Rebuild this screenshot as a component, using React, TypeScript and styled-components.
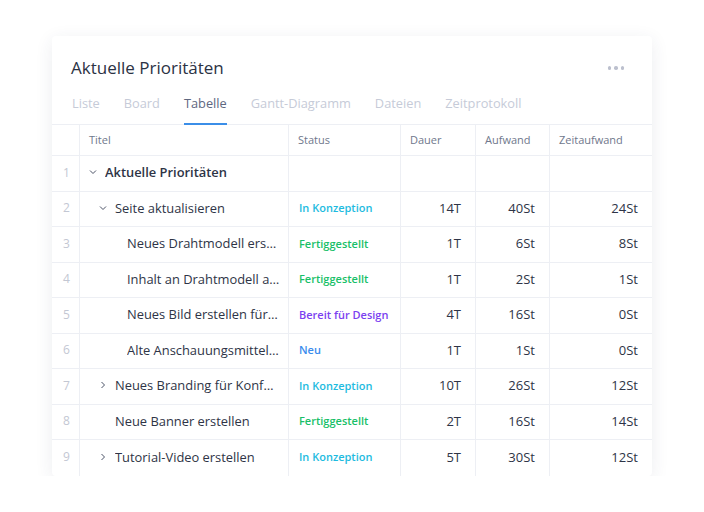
import React from "react";
import styled, { createGlobalStyle } from "styled-components";

const GlobalStyle = createGlobalStyle`
  body {
    margin: 0;
    background: #ffffff;
    font-family: "Open Sans", "Noto Sans", sans-serif;
  }
`;

const Page = styled.div`
  padding: 36px 0 0 52px;
`;

const Card = styled.div`
  width: 600px;
  background: #fff;
  border-radius: 4px;
  box-shadow: 0 4px 18px rgba(40, 50, 90, 0.09);
  overflow: hidden;
`;

const Header = styled.div`
  padding: 20px 28px 0 19px;
  display: flex;
  align-items: center;
  justify-content: space-between;
`;

const Title = styled.h1`
  margin: 0;
  font-size: 17px;
  line-height: 24px;
  font-weight: 400;
  color: #2b3244;
`;

const Dots = styled.div`
  display: flex;
  gap: 3px;
  span {
    width: 3.5px;
    height: 3.5px;
    border-radius: 50%;
    background: #bcc0ce;
  }
`;

const TabBar = styled.div`
  display: flex;
  gap: 24px;
  margin-top: 10px;
  padding-left: 20px;
  border-bottom: 1px solid #edeff4;
`;

const Tab = styled.div<{ $active?: boolean }>`
  padding: 4px 0 11px;
  font-size: 12.8px;
  line-height: 18px;
  color: ${(p) => (p.$active ? "#5e6780" : "#c6cbd8")};
  border-bottom: 2px solid ${(p) => (p.$active ? "#3b8ee8" : "transparent")};
  margin-bottom: -1px;
`;

const Row = styled.div<{ $head?: boolean; $last?: boolean }>`
  display: grid;
  grid-template-columns: 28px 209px 112px 75px 74px 102px;
  height: ${(p) => (p.$head ? "31px" : "35.5px")};
  box-sizing: border-box;
  border-bottom: ${(p) => (p.$last ? "none" : "1px solid #edeff4")};
`;

const Cell = styled.div<{ $align?: "left" | "right" | "center" }>`
  display: flex;
  align-items: center;
  justify-content: ${(p) =>
    p.$align === "right" ? "flex-end" : p.$align === "center" ? "center" : "flex-start"};
  border-right: 1px solid #edeff4;
  min-width: 0;
  padding-bottom: 2px;
  &:last-child {
    border-right: none;
  }
`;

const HeadCell = styled(Cell)`
  padding-left: 9px;
  font-size: 11px;
  color: #6f788c;
`;

const NumCell = styled(Cell)`
  font-size: 12px;
  color: #c3c7d3;
  padding-left: 2px;
`;

const TitleCell = styled(Cell)<{ $indent: number }>`
  padding-left: ${(p) => p.$indent}px;
  padding-right: 8px;
`;

const Chevron = styled.span`
  width: 16px;
  flex: 0 0 16px;
  display: flex;
  align-items: center;
  color: #4b5266;
`;

const TitleText = styled.span<{ $bold?: boolean }>`
  font-size: 12.9px;
  font-weight: ${(p) => (p.$bold ? 600 : 400)};
  color: #2e3446;
  white-space: nowrap;
  overflow: hidden;
  text-overflow: ellipsis;
`;

const statusColors: Record<string, string> = {
  "In Konzeption": "#1ebbe0",
  Fertiggestellt: "#19bf68",
  "Bereit für Design": "#7b3ff0",
  Neu: "#3a8ced",
};

const Status = styled(Cell)<{ $color: string }>`
  padding-left: 10px;
  font-size: 11px;
  font-weight: 600;
  color: ${(p) => p.$color};
`;

const Value = styled(Cell)`
  padding-right: 14px;
  font-size: 13px;
  color: #2e3446;
`;

type Item = {
  title: string;
  indent: number;
  chevron?: "down" | "right";
  bold?: boolean;
  status?: string;
  dauer?: string;
  aufwand?: string;
  zeit?: string;
};

const items: Item[] = [
  { title: "Aktuelle Prioritäten", indent: 9, chevron: "down", bold: true },
  { title: "Seite aktualisieren", indent: 19, chevron: "down", status: "In Konzeption", dauer: "14T", aufwand: "40St", zeit: "24St" },
  { title: "Neues Drahtmodell erstellen", indent: 47, status: "Fertiggestellt", dauer: "1T", aufwand: "6St", zeit: "8St" },
  { title: "Inhalt an Drahtmodell anpassen", indent: 47, status: "Fertiggestellt", dauer: "1T", aufwand: "2St", zeit: "1St" },
  { title: "Neues Bild erstellen für Website", indent: 47, status: "Bereit für Design", dauer: "4T", aufwand: "16St", zeit: "0St" },
  { title: "Alte Anschauungsmittel entfernen", indent: 47, status: "Neu", dauer: "1T", aufwand: "1St", zeit: "0St" },
  { title: "Neues Branding für Konferenz", indent: 19, chevron: "right", status: "In Konzeption", dauer: "10T", aufwand: "26St", zeit: "12St" },
  { title: "Neue Banner erstellen", indent: 35, status: "Fertiggestellt", dauer: "2T", aufwand: "16St", zeit: "14St" },
  { title: "Tutorial-Video erstellen", indent: 19, chevron: "right", status: "In Konzeption", dauer: "5T", aufwand: "30St", zeit: "12St" },
];

function ChevronIcon({ dir }: { dir: "down" | "right" }) {
  return (
    <svg width="8" height="8" viewBox="0 0 8 8" fill="none">
      {dir === "down" ? (
        <path d="M1 2.5 L4 5.5 L7 2.5" stroke="currentColor" strokeWidth="1" />
      ) : (
        <path d="M2.5 1 L5.5 4 L2.5 7" stroke="currentColor" strokeWidth="1" />
      )}
    </svg>
  );
}

const tabs = ["Liste", "Board", "Tabelle", "Gantt-Diagramm", "Dateien", "Zeitprotokoll"];

export default function App() {
  return (
    <Page>
      <GlobalStyle />
      <Card>
        <Header>
          <Title>Aktuelle Prioritäten</Title>
          <Dots>
            <span />
            <span />
            <span />
          </Dots>
        </Header>
        <TabBar>
          {tabs.map((t) => (
            <Tab key={t} $active={t === "Tabelle"}>
              {t}
            </Tab>
          ))}
        </TabBar>
        <Row $head>
          <HeadCell />
          <HeadCell>Titel</HeadCell>
          <HeadCell>Status</HeadCell>
          <HeadCell>Dauer</HeadCell>
          <HeadCell>Aufwand</HeadCell>
          <HeadCell>Zeitaufwand</HeadCell>
        </Row>
        {items.map((it, i) => (
          <Row key={i} $last={i === items.length - 1}>
            <NumCell $align="center">{i + 1}</NumCell>
            <TitleCell $indent={it.indent}>
              {it.chevron && (
                <Chevron>
                  <ChevronIcon dir={it.chevron} />
                </Chevron>
              )}
              <TitleText $bold={it.bold}>{it.title}</TitleText>
            </TitleCell>
            <Status $color={it.status ? statusColors[it.status] : "inherit"}>{it.status}</Status>
            <Value $align="right">{it.dauer}</Value>
            <Value $align="right">{it.aufwand}</Value>
            <Value $align="right">{it.zeit}</Value>
          </Row>
        ))}
      </Card>
    </Page>
  );
}
